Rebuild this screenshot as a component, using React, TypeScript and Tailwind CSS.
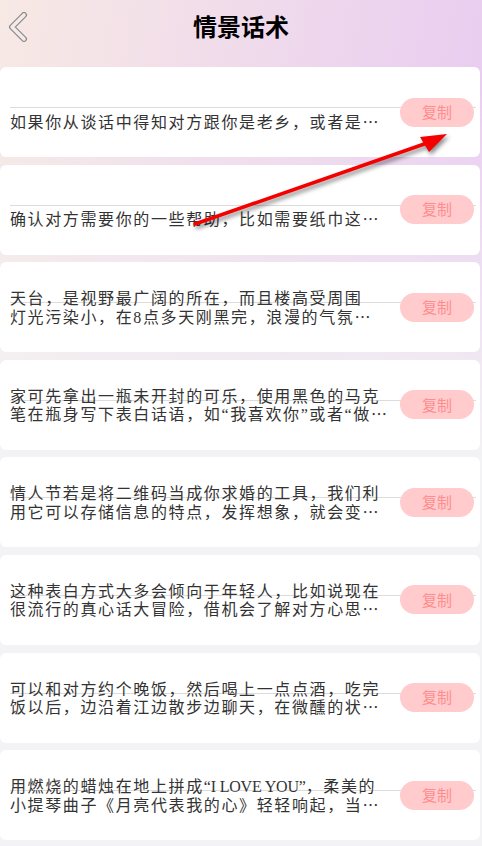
import type { ReactNode } from "react";

type Item = {
  id: number;
  lines: ReactNode[]; // last line gets the ellipsis, null = empty first line
};

// latin words sit tighter than the cjk run around them
const latin = (s: string) => <span className="tracking-[-0.2px]">{s}</span>;

const items: Item[] = [
  { id: 1, lines: [null, "如果你从谈话中得知对方跟你是老乡，或者是"] },
  { id: 2, lines: [null, "确认对方需要你的一些帮助，比如需要纸巾这"] },
  { id: 3, lines: ["天台，是视野最广阔的所在，而且楼高受周围", "灯光污染小，在8点多天刚黑完，浪漫的气氛"] },
  { id: 4, lines: ["家可先拿出一瓶未开封的可乐，使用黑色的马克", "笔在瓶身写下表白话语，如“我喜欢你”或者“做"] },
  { id: 5, lines: ["情人节若是将二维码当成你求婚的工具，我们利", "用它可以存储信息的特点，发挥想象，就会变"] },
  { id: 6, lines: ["这种表白方式大多会倾向于年轻人，比如说现在", "很流行的真心话大冒险，借机会了解对方心思"] },
  { id: 7, lines: ["可以和对方约个晚饭，然后喝上一点点酒，吃完", "饭以后，边沿着江边散步边聊天，在微醺的状"] },
  {
    id: 8,
    lines: [
      <>用燃烧的蜡烛在地上拼成{latin("“I LOVE YOU”")}，柔美的</>,
      "小提琴曲子《月亮代表我的心》轻轻响起，当",
    ],
  },
];

function PhraseCard({ item }: { item: Item }) {
  return (
    <div className="relative flex h-[90px] mr-[2px] rounded-[6px] bg-white">
      {/* thin divider that runs behind text and button */}
      <div className="absolute left-[10px] right-[4px] top-[40px] h-px bg-[#dcdcdc]" />
      <div className="relative ml-[10px] mt-[29px] h-[35px] w-[386px] flex flex-col justify-end font-['Liberation_Serif','Noto_Sans_CJK_SC',serif] text-[16px] leading-[17.5px] tracking-[1.62px] text-[#333333]">
        {item.lines.map((line, i) =>
          line === null ? null : (
            <p key={i} className="whitespace-nowrap">
              {line}
              {i === item.lines.length - 1 && (
                <span className="font-['Noto_Sans_CJK_SC',sans-serif] tracking-normal">…</span>
              )}
            </p>
          )
        )}
      </div>
      <button className="relative ml-auto mr-[6px] self-center h-[29px] w-[74px] rounded-full bg-[#ffcbcc] font-['Noto_Sans_CJK_SC',sans-serif] text-[15px] text-[#ff8c8e]">
        复制
      </button>
    </div>
  );
}

export default function App() {
  return (
    <div className="relative h-[846px] w-full overflow-hidden bg-[linear-gradient(180deg,rgba(243,242,244,0)_0px,rgba(243,242,244,0)_90px,#f3f2f4_460px),linear-gradient(100deg,#f7e9e4_0%,#efd9ec_45%,#e6c6f3_100%)]">
      <header className="relative h-[67px]">
        <svg className="absolute left-[6px] top-[12px]" width="24" height="30" viewBox="0 0 24 30">
          <path d="M18 3 L6 15 L18 27" fill="none" stroke="#8a8a8a" strokeWidth="6" strokeLinecap="round" strokeLinejoin="round" />
          <path d="M18 3 L6 15 L18 27" fill="none" stroke="#f6e9ea" strokeWidth="3.6" strokeLinecap="round" strokeLinejoin="round" />
        </svg>
        <h1 className="pt-[10px] text-center font-['Noto_Sans_CJK_SC',sans-serif] text-[24px] font-bold leading-[32px] text-black">
          情景话术
        </h1>
      </header>

      <div className="flex flex-col gap-[7.6px]">
        {items.map((item) => (
          <PhraseCard key={item.id} item={item} />
        ))}
      </div>

      {/* red annotation arrow drawn over the screenshot */}
      <svg className="pointer-events-none absolute left-0 top-0" width="482" height="846" viewBox="0 0 482 846">
        <g style={{ filter: "drop-shadow(2px 3px 2px rgba(0,0,0,0.45))" }}>
          <line x1="195" y1="224" x2="430" y2="142" stroke="#f50000" strokeWidth="3.5" strokeLinecap="round" />
          <polygon points="447,134 420,137 429,152" fill="#f50000" />
        </g>
      </svg>
    </div>
  );
}
